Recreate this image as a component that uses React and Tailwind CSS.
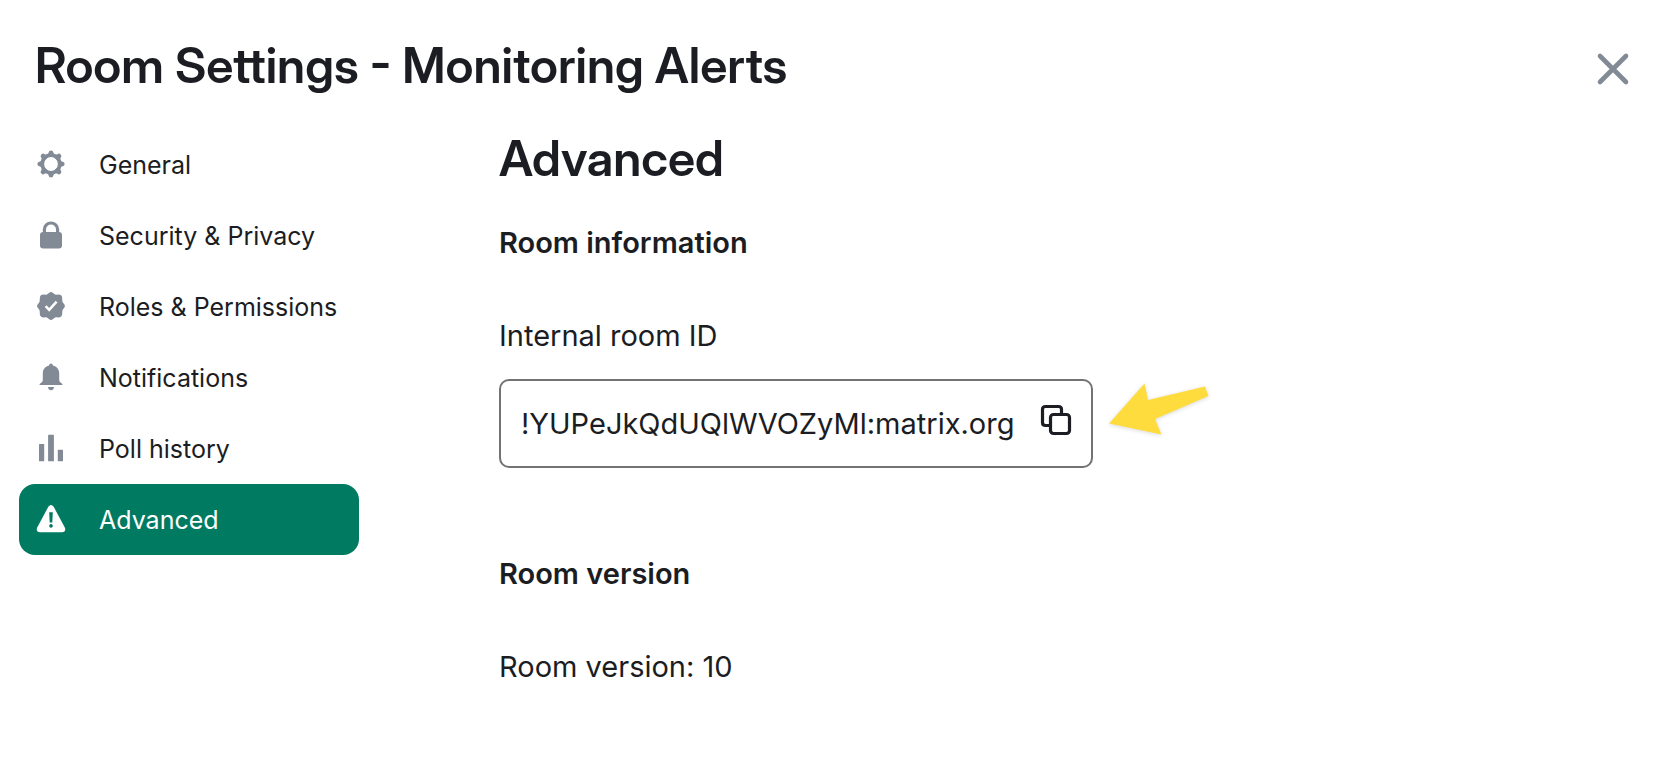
import React from "react";

function GearIcon() {
  return (
    <svg viewBox="0 0 30 30" className="size-[30px]" fill="currentColor" aria-hidden="true">
      <g>
        {[0, 45, 90, 135, 180, 225, 270, 315].map((a) => (
          <path key={a} transform={`rotate(${a} 15 15)`} d="M11 6.4 Q12.5 5.2 12.7 3.2 Q12.9 1.4 15 1.4 Q17.1 1.4 17.3 3.2 Q17.5 5.2 19 6.4 L18 8 H12 Z" />
        ))}
      </g>
      <circle cx="15" cy="15" r="8.8" fill="none" stroke="currentColor" strokeWidth="3.8" />
    </svg>
  );
}

function LockIcon() {
  return (
    <svg viewBox="0 0 30 30" className="size-[30px]" aria-hidden="true">
      <path d="M8.4 14 V9.4 a6.6 6.4 0 0 1 13.2 0 V14" fill="none" stroke="currentColor" strokeWidth="3.2" />
      <rect x="4" y="12" width="22" height="16.4" rx="3.2" fill="currentColor" />
    </svg>
  );
}

function RolesIcon() {
  return (
    <svg viewBox="0 0 30 30" className="size-[30px]" aria-hidden="true">
      <path
        fill="currentColor"
        d="M13.2 1.8 Q15 .2 16.8 1.8 L18.3 3 Q19.2 3.8 20.4 3.7 L22.6 3.6 Q25.7 3.6 26.1 6.4 L26.3 9.6 Q26.3 10.8 27 11.7 L28.3 13.2 Q29.7 15 28.3 16.8 L27 18.3 Q26.3 19.2 26.3 20.4 L26.1 23.6 Q25.7 26.4 22.6 26.4 L20.4 26.3 Q19.2 26.2 18.3 27 L16.8 28.2 Q15 29.8 13.2 28.2 L11.7 27 Q10.8 26.2 9.6 26.3 L7.4 26.4 Q4.3 26.4 3.9 23.6 L3.7 20.4 Q3.7 19.2 3 18.3 L1.7 16.8 Q.3 15 1.7 13.2 L3 11.7 Q3.7 10.8 3.7 9.6 L3.9 6.4 Q4.3 3.6 7.4 3.6 L9.6 3.7 Q10.8 3.8 11.7 3 Z"
      />
      <path d="M9.6 15.2 L13.2 18.9 L20.6 10.6" fill="none" stroke="white" strokeWidth="2.5" />
    </svg>
  );
}

function BellIcon() {
  return (
    <svg viewBox="0 0 30 30" className="size-[30px]" fill="currentColor" aria-hidden="true">
      <path d="M15 1.5 C16.1 1.5 16.8 2.3 16.9 3.4 C20.6 4.2 23.2 7.2 23.2 11.2 V18 Q23.2 19.4 24.2 20.3 L26.4 22 Q27 22.8 26 22.9 H4 Q3 22.8 3.6 22 L5.8 20.3 Q6.8 19.4 6.8 18 V11.2 C6.8 7.2 9.4 4.2 13.1 3.4 C13.2 2.3 13.9 1.5 15 1.5 Z" />
      <path d="M12 25 H18 C18 26.8 16.8 28.3 15 28.3 C13.2 28.3 12 26.8 12 25 Z" />
    </svg>
  );
}

function PollIcon() {
  return (
    <svg viewBox="0 0 30 30" className="size-[30px]" fill="currentColor" aria-hidden="true">
      <rect x="3" y="11" width="5.2" height="17.2" rx=".5" />
      <rect x="12.1" y="1.7" width="5.8" height="26.5" rx=".5" />
      <rect x="21.8" y="16.8" width="5.2" height="11.4" rx=".5" />
    </svg>
  );
}

function WarningIcon() {
  return (
    <svg viewBox="0 0 30 30" className="size-[30px]" aria-hidden="true">
      <path fill="currentColor" d="M12.3 2.8 Q15 -.6 17.7 2.8 L28.8 23.4 Q30.4 27.6 26 28.2 H4 Q-.4 27.6 1.2 23.4 Z" />
      <path fill="#007a61" d="M13.2 8.2 H16.8 L16.3 18.6 H13.7 Z" />
      <circle cx="15" cy="21.9" r="1.8" fill="#007a61" />
    </svg>
  );
}

const tabs = [
  { label: "General", Icon: GearIcon },
  { label: "Security & Privacy", Icon: LockIcon },
  { label: "Roles & Permissions", Icon: RolesIcon },
  { label: "Notifications", Icon: BellIcon },
  { label: "Poll history", Icon: PollIcon },
  { label: "Advanced", Icon: WarningIcon, active: true },
];

export default function App() {
  return (
    <div className="min-h-screen bg-white font-['Inter',sans-serif] text-[#1b1d22]">
      <header className="flex items-end justify-between pt-9 pr-9 pl-[35px]">
        <h1 className="font-['Inter_Display','Inter',sans-serif] text-[49px] leading-[60px] font-semibold">Room Settings - Monitoring Alerts</h1>
        <button type="button" aria-label="Close" className="mb-2 text-[#818a95]">
          <svg viewBox="0 0 38 38" className="size-[38px]" fill="none" stroke="currentColor" strokeWidth="4.6" strokeLinecap="round" aria-hidden="true">
            <path d="M6 6 L32 32 M32 6 L6 32" />
          </svg>
        </button>
      </header>

      <div className="flex pt-[33px] pl-[19px]">
        <nav aria-label="Room settings" className="mr-[140px] flex w-[340px] shrink-0 flex-col">
          {tabs.map(({ label, Icon, active }) => (
            <button
              key={label}
              type="button"
              aria-current={active ? "page" : undefined}
              className={
                active
                  ? "flex h-[71px] items-center gap-[33px] rounded-2xl bg-[#007a61] pt-0.5 pl-[17px] text-left text-[25px] text-white"
                  : "flex h-[71px] items-center gap-[33px] rounded-2xl pt-0.5 pl-[17px] text-left text-[25px]"
              }
            >
              <span className={active ? "pb-1 text-white" : "pb-1 text-[#818a95]"}>
                <Icon />
              </span>
              {label}
            </button>
          ))}
        </nav>

        <main className="min-w-0 flex-1">
          <h2 className="font-['Inter_Display','Inter',sans-serif] text-[49px] leading-[60px] font-semibold">Advanced</h2>
          <section className="mt-9">
            <h3 className="text-[29px] leading-9 font-semibold">Room information</h3>
            <p className="mt-[57px] text-[29px] leading-9">Internal room ID</p>
            <div className="mt-[25px] flex items-center gap-4">
              <div className="flex h-[89px] items-center gap-[26px] rounded-[10px] border-2 border-[#737373] pr-[19px] pl-5">
                <span className="text-[29px] leading-9">!YUPeJkQdUQlWVOZyMl:matrix.org</span>
                <button type="button" aria-label="Copy" className="mb-2">
                  <svg viewBox="0 0 32 32" className="size-8" fill="none" stroke="currentColor" strokeWidth="3.2" aria-hidden="true">
                    <path d="M9.5 21.5 H5.5 Q2.5 21.5 2.5 18.5 V5.500 Q2.5 2.500 5.500 2.500 H18.500 Q21.500 2.500 21.500 5.500 V10" />
                    <rect x="10.5" y="10.5" width="19" height="19" rx="3" />
                  </svg>
                </button>
              </div>
              <svg viewBox="0 0 104 60" className="mb-7 h-[60px] w-[104px] overflow-visible drop-shadow-sm" aria-hidden="true">
                <path fill="#ffdc3d" d="M0 43.5 L35.5 3.5 L39 20 L96 6.5 L99.500 16 L46 39 L52.500 54.500 Z" />
              </svg>
            </div>
          </section>
          <section className="mt-[88px]">
            <h3 className="text-[29px] leading-9 font-semibold">Room version</h3>
            <p className="mt-[57px] text-[29px] leading-9">Room version: 10</p>
          </section>
        </main>
      </div>
    </div>
  );
}
